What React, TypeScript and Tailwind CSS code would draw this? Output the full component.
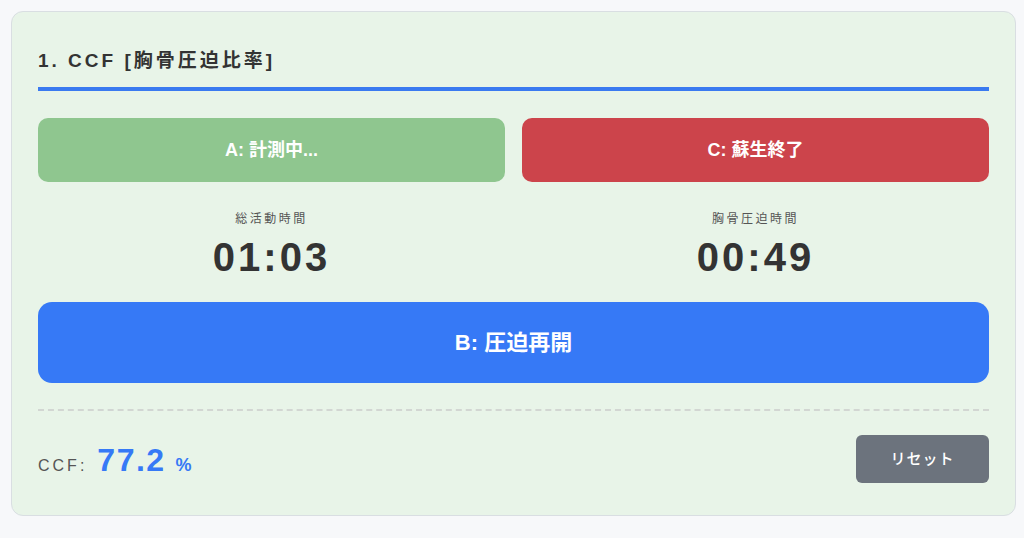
import React, { useState } from 'react';

const font = { fontFamily: '"Liberation Sans", "Noto Sans CJK JP", sans-serif' };

export default function App() {
  const [ccf] = useState(77.2);

  return (
    <div className="min-h-screen bg-[#f7f8fa] pt-[11px] pb-[20px]" style={font}>
      <div className="ml-[11px] mr-[8px] border border-[#d9dee2] rounded-[12px] bg-[#e8f4e8] px-[26px] pt-[36px] pb-[32px]">
        <h2 className="text-[19px] leading-[25px] font-bold tracking-[3px] text-[#333] pb-[14px] border-b-4 border-[#3a7af0]">
          1. CCF [胸骨圧迫比率]
        </h2>

        <div className="mt-[27px] grid grid-cols-2 gap-[17px]">
          <button className="h-[64px] rounded-[10px] bg-[#8fc68f] text-white font-bold text-[18px]">
            A: 計測中...
          </button>
          <button className="h-[64px] rounded-[10px] bg-[#cc444b] text-white font-bold text-[18px]">
            C: 蘇生終了
          </button>
        </div>

        <div className="mt-[28px] grid grid-cols-2 gap-[17px] text-center">
          <div>
            <div className="text-[12px] leading-[18px] tracking-[2.5px] text-[#555]">総活動時間</div>
            <div className="mt-[6px] text-[40px] leading-[46px] font-bold tracking-[3px] text-[#333]">01:03</div>
          </div>
          <div>
            <div className="text-[12px] leading-[18px] tracking-[2.5px] text-[#555]">胸骨圧迫時間</div>
            <div className="mt-[6px] text-[40px] leading-[46px] font-bold tracking-[3px] text-[#333]">00:49</div>
          </div>
        </div>

        <button className="mt-[22px] w-full h-[81px] rounded-[14px] bg-[#3679f6] text-white font-bold text-[22px]">
          B: 圧迫再開
        </button>

        <div className="mt-[26px] border-t-2 border-dashed border-[#d2d6d2]" />

        <div className="mt-[24px] flex items-center justify-between h-[48px]">
          <div className="flex items-baseline pt-[2px]">
            <span className="text-[16px] tracking-[3px] text-[#555]">CCF:</span>
            <span className="ml-[10px] text-[32px] font-bold tracking-[1.5px] text-[#3679f6]">{ccf.toFixed(1)}</span>
            <span className="ml-[10px] text-[18px] font-bold text-[#3679f6]">%</span>
          </div>
          <button className="w-[133px] h-[48px] rounded-[6px] bg-[#6c737d] text-white text-[15px] font-medium tracking-[1px]">
            リセット
          </button>
        </div>
      </div>
    </div>
  );
}
